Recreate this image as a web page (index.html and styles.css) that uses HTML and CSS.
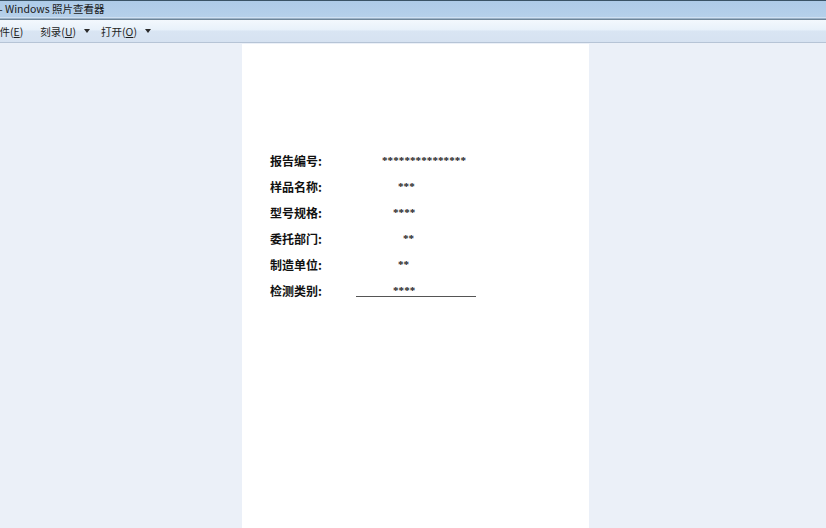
FILE: index.html
```html
<!DOCTYPE html>
<html lang="zh">
<head>
<meta charset="utf-8">
<title>Windows 照片查看器</title>
<link rel="stylesheet" href="styles.css">
</head>
<body>
<div class="window">
  <div class="titlebar"><span class="title">- Windows 照片查看器</span></div>
  <div class="toolbar">
    <span class="menu menu-file">文件(<u>E</u>)</span>
    <span class="menu">刻录(<u>U</u>)<span class="caret"></span></span>
    <span class="menu">打开(<u>O</u>)<span class="caret"></span></span>
  </div>
  <div class="viewer">
    <div class="page">
      <div class="fields">
        <div class="row"><span class="label">报告编号:</span><span class="value v1">***************</span></div>
        <div class="row"><span class="label">样品名称:</span><span class="value v2">***</span></div>
        <div class="row"><span class="label">型号规格:</span><span class="value v3">****</span></div>
        <div class="row"><span class="label">委托部门:</span><span class="value v4">**</span></div>
        <div class="row"><span class="label">制造单位:</span><span class="value v5">**</span></div>
        <div class="row"><span class="label">检测类别:</span><span class="value v6"><span class="under">****</span></span></div>
      </div>
    </div>
  </div>
</div>
</body>
</html>
```

FILE: styles.css
```css
html, body {
  margin: 0;
  padding: 0;
  width: 826px;
  height: 528px;
  overflow: hidden;
}
.window {
  width: 826px;
  height: 528px;
  display: flex;
  flex-direction: column;
  background: #eaf0f8;
  font-family: "Noto Sans CJK SC", "Noto Sans", sans-serif;
}
.titlebar {
  height: 16px;
  border-top: 1px solid #3a5366;
  background: linear-gradient(#aecbe8, #b6d0ea);
  border-bottom: 1px solid #cfe0f2;
  box-shadow: 0 1px 0 #9bb2c8, 0 2px 0 #6f8598;
  display: flex;
  align-items: center;
  overflow: hidden;
  flex: none;
}
.title {
  font-size: 10.5px;
  color: #1a1a1a;
  margin-left: -1px;
  white-space: nowrap;
  line-height: 16px;
}
.toolbar {
  margin-top: 2px;
  height: 22px;
  background: linear-gradient(#f3f8fd 0%, #e8f1fa 45%, #d9e5f3 50%, #d6e2f1 100%);
  border-bottom: 1px solid #b6c4d6;
  box-shadow: 0 1px 0 #f6f9fd;
  display: flex;
  align-items: center;
  overflow: hidden;
  flex: none;
  font-size: 10.5px;
  color: #1e1e1e;
}
.menu {
  display: flex;
  align-items: center;
  white-space: nowrap;
  margin-right: 11px;
}
.menu u {
  text-decoration: underline;
}
.menu-file {
  margin-left: -11px;
  margin-right: 17px;
}
.caret {
  width: 0;
  height: 0;
  border-left: 3px solid transparent;
  border-right: 3px solid transparent;
  border-top: 4px solid #2a2a2a;
  margin-left: 8px;
}
.viewer {
  flex: 1;
  display: flex;
  padding-left: 242px;
  padding-top: 1px;
  background: #ebf0f8;
}
.page {
  width: 347px;
  background: #ffffff;
  padding-top: 107px;
}
.fields {
  padding-left: 28px;
  display: flex;
  flex-direction: column;
  gap: 8px;
}
.row {
  height: 18px;
  display: flex;
  align-items: center;
}
.label {
  width: 86px;
  font-size: 12px;
  font-weight: bold;
  color: #111;
  font-family: "Noto Sans CJK SC", sans-serif;
}
.value {
  font-family: "Liberation Serif", serif;
  font-size: 11px;
  font-weight: bold;
  color: #222;
  letter-spacing: 0.1px;
}
.v1 { margin-left: 26px; }
.v2 { margin-left: 42px; }
.v3 { margin-left: 37px; }
.v4 { margin-left: 47px; }
.v5 { margin-left: 42px; }
.v6 { margin-left: 0; }
.under {
  display: inline-block;
  width: 120px;
  padding-left: 37px;
  box-sizing: border-box;
  border-bottom: 1px solid #555;
  line-height: 12px;
}
```
